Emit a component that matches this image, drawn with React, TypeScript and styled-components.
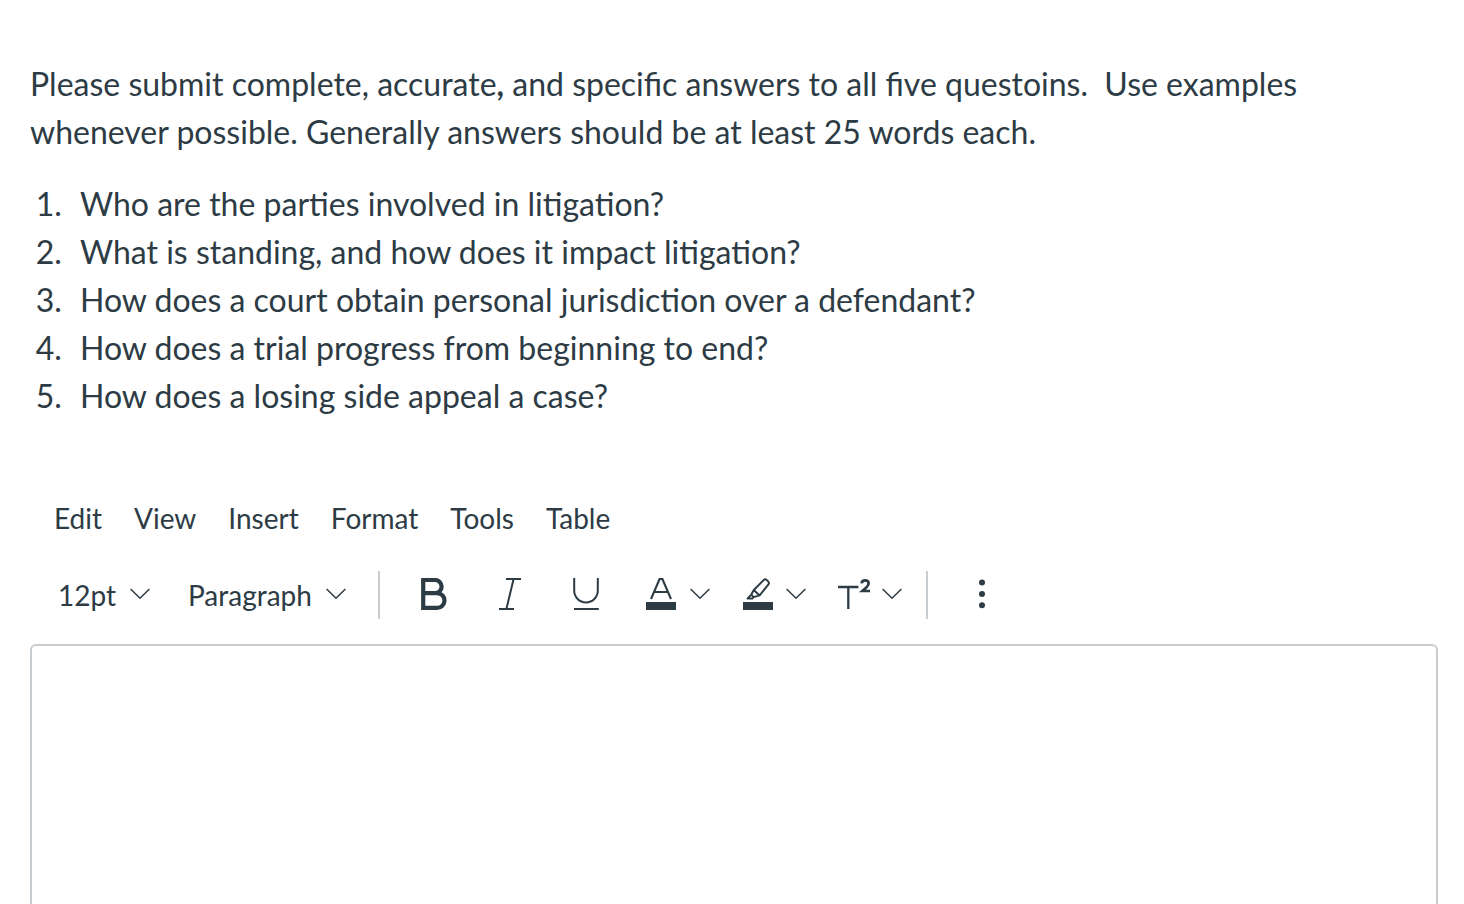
import React from "react";
import styled, { createGlobalStyle } from "styled-components";

const ink = "#2d3b45";
const line = "#c7cdd1";

const GlobalStyle = createGlobalStyle`
  *, *::before, *::after { box-sizing: border-box; }
  body {
    margin: 0;
    background: #fff;
    color: ${ink};
    font-family: Lato, "Liberation Sans", sans-serif;
    font-size: 32px;
    line-height: 48px;
  }
  button, select, textarea { font: inherit; color: inherit; }
`;

const Page = styled.main`
  display: flex;
  flex-direction: column;
  min-height: 100vh;
  padding: 60px 26px 0 30px;
`;

const Instructions = styled.p`
  margin: 0 0 24px;
`;

const Questions = styled.ol`
  margin: 0 0 72px;
  padding: 0 0 0 40px;
`;

const Question = styled.li`
  padding-left: 10px;
`;

const Editor = styled.section`
  display: flex;
  flex: 1;
  flex-direction: column;
`;

const MenuBar = styled.div`
  display: flex;
  flex-wrap: wrap;
  margin-bottom: 27px;
  padding-left: 8px;
`;

const MenuButton = styled.button`
  padding: 0 16px;
  border: 0;
  background: none;
  font-size: 28px;
  line-height: 52px;
`;

const ToolBar = styled.div`
  display: flex;
  flex-wrap: wrap;
  align-items: center;
  margin-bottom: 25px;
  padding-left: 28px;
`;

const Picker = styled.label<{ $width: number; $gap: number }>`
  display: grid;
  width: ${(p) => p.$width}px;
  align-items: center;
  margin-right: ${(p) => p.$gap}px;
  padding-bottom: 2px;

  > * { grid-area: 1 / 1; }
  > svg { justify-self: end; pointer-events: none; }
`;

const PickerSelect = styled.select`
  width: 100%;
  height: 46px;
  padding: 0;
  border: 0;
  appearance: none;
  background: none;
  font-size: 28px;
`;

const Divider = styled.span`
  width: 2px;
  height: 48px;
  margin-right: 16px;
  background: ${line};
`;

const ToolButton = styled.button<{ $split?: boolean }>`
  display: flex;
  align-items: center;
  justify-content: center;
  gap: 12px;
  width: ${(p) => (p.$split ? 96 : 76)}px;
  height: 48px;
  padding: 0 0 2px;
  border: 0;
  background: none;
`;

const SplitTools = styled.div`
  display: flex;
  margin: 0 8px 0 6px;
`;

const Glyph = styled.svg`
  display: block;
  flex: none;
  fill: none;
  stroke: ${ink};
  stroke-width: 2;
`;

const Answer = styled.textarea`
  display: block;
  flex: 1;
  width: 100%;
  min-height: 240px;
  padding: 24px;
  border: 2px solid ${line};
  border-bottom: 0;
  border-radius: 6px 6px 0 0;
  outline: 0;
  background: #fff;
  resize: none;
`;

const Icon = ({ children }: { children: React.ReactNode }) => (
  <Glyph width="32" height="32" viewBox="0 0 32 32" aria-hidden="true">
    {children}
  </Glyph>
);

const Chevron = () => (
  <Glyph width="20" height="12" viewBox="0 0 20 12" aria-hidden="true">
    <path d="M.6 1 10 10.3 19.4 1" strokeWidth="1.5" />
  </Glyph>
);

const BoldIcon = () => (
  <Icon>
    <path
      d="M5.2 2H17a6.4 6.4 0 0 1 0 13.2H5.2M17 15.2h2.2a7.2 7.2 0 0 1 0 14.6H5.2M5.2 0V32"
      strokeWidth="4.2"
    />
  </Icon>
);

const ItalicIcon = () => (
  <Icon>
    <path d="M12 1h15M5 31h15M19.6 1 12.4 31" />
  </Icon>
);

const UnderlineIcon = () => (
  <Icon>
    <path d="M4.2 0v12.6a11.8 11.8 0 0 0 23.6 0V0M4 31h24.8" />
  </Icon>
);

const TextColorIcon = () => (
  <Icon>
    <path d="M5 21 13.6 1h2.8L25 21M8 14h14" strokeWidth="2.1" />
    <path d="M0 24h30v8H0z" fill={ink} stroke="none" />
  </Icon>
);

const HighlightIcon = () => (
  <Icon>
    <path
      d="M10.8 12 20.6 2.1q1.6-1.6 3.2 0l1.3 1.3q1.6 1.6.2 3.3L16.6 17.4ZM10.8 12l5.8 5.4-6 1.7-2.3-2.5ZM8.3 16.6l2.3 2.5L9.2 20.4H4.6Z"
      strokeLinejoin="round"
      transform="translate(1 0)"
    />
    <path d="M1 24h30v8H1z" fill={ink} stroke="none" />
  </Icon>
);

const SuperscriptIcon = () => (
  <Icon>
    <path d="M0 9h20.4M10.3 9v22" strokeWidth="2.3" />
    <path
      d="M23.6 5.3C23.9 2.8 25.5 2.4 27.2 2.4c2 0 3.5 1 3.4 3 0 2.4-2.6 4.4-6.2 7.6h7.9"
      strokeWidth="2.7"
    />
  </Icon>
);

const MoreIcon = () => (
  <Icon>
    <g fill={ink} stroke="none">
      <circle cx="16" cy="4.5" r="3" />
      <circle cx="16" cy="16" r="3" />
      <circle cx="16" cy="27.3" r="3" />
    </g>
  </Icon>
);

const menus = ["Edit", "View", "Insert", "Format", "Tools", "Table"];

const questions = [
  "Who are the parties involved in litigation?",
  "What is standing, and how does it impact litigation?",
  "How does a court obtain personal jurisdiction over a defendant?",
  "How does a trial progress from beginning to end?",
  "How does a losing side appeal a case?",
];

export default function App() {
  return (
    <>
      <GlobalStyle />
      <Page>
        <Instructions>
          Please submit complete, accurate<strong>,</strong> and specific answers to all five
          questoins.&nbsp; Use examples whenever possible. Generally answers should be at least 25
          words each.
        </Instructions>
        <Questions>
          {questions.map((q) => (
            <Question key={q}>{q}</Question>
          ))}
        </Questions>
        <Editor aria-label="Answer editor">
          <MenuBar role="menubar">
            {menus.map((m) => (
              <MenuButton key={m} type="button" role="menuitem">
                {m}
              </MenuButton>
            ))}
          </MenuBar>
          <ToolBar role="toolbar" aria-label="Formatting">
            <Picker $width={92} $gap={38}>
              <PickerSelect aria-label="Font size">
                <option>12pt</option>
              </PickerSelect>
              <Chevron />
            </Picker>
            <Picker $width={158} $gap={32}>
              <PickerSelect aria-label="Block style">
                <option>Paragraph</option>
              </PickerSelect>
              <Chevron />
            </Picker>
            <Divider />
            <ToolButton type="button" aria-label="Bold">
              <BoldIcon />
            </ToolButton>
            <ToolButton type="button" aria-label="Italic">
              <ItalicIcon />
            </ToolButton>
            <ToolButton type="button" aria-label="Underline">
              <UnderlineIcon />
            </ToolButton>
            <SplitTools>
              <ToolButton type="button" $split aria-label="Text color">
                <TextColorIcon />
                <Chevron />
              </ToolButton>
              <ToolButton type="button" $split aria-label="Highlight color">
                <HighlightIcon />
                <Chevron />
              </ToolButton>
              <ToolButton type="button" $split aria-label="Superscript">
                <SuperscriptIcon />
                <Chevron />
              </ToolButton>
            </SplitTools>
            <Divider />
            <ToolButton type="button" aria-label="More options">
              <MoreIcon />
            </ToolButton>
          </ToolBar>
          <Answer aria-label="Your answer" />
        </Editor>
      </Page>
    </>
  );
}
